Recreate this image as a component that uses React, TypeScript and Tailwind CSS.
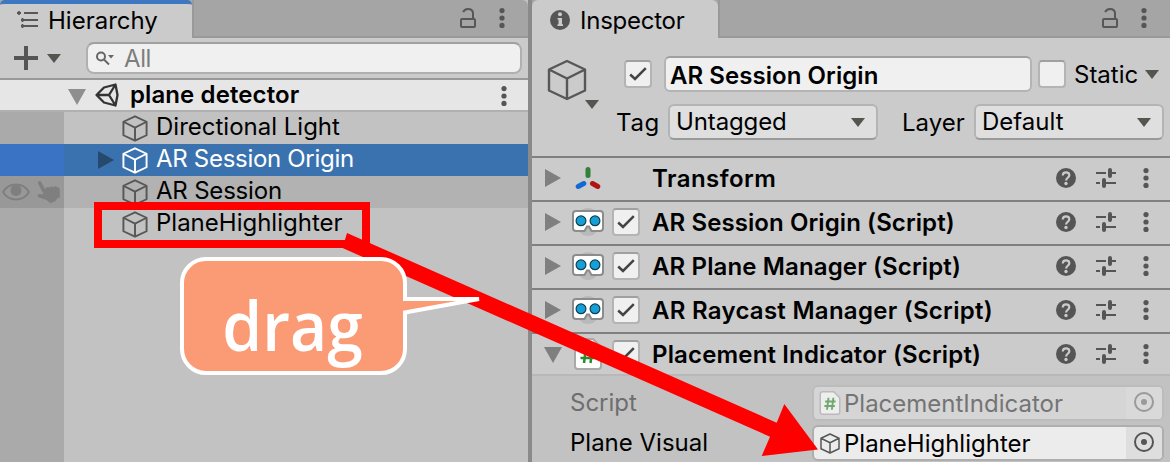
import React from "react";

const Kebab = ({ className = "" }: { className?: string }) => (
  <svg viewBox="0 0 6 20" className={`h-5 w-1.5 shrink-0 fill-[#555] ${className}`}>
    <circle cx="3" cy="2.6" r="2.6" />
    <circle cx="3" cy="10" r="2.6" />
    <circle cx="3" cy="17.4" r="2.6" />
  </svg>
);

const Lock = () => (
  <svg viewBox="0 0 16 20" className="h-5 w-4 shrink-0" fill="none" stroke="#575757" strokeWidth="2">
    <rect x="1" y="11" width="14" height="8" rx="1" />
    <path d="M3.2 4.2C4 2 5.800 1 8 1c3 0 5 1.800 5 4.500V11" />
  </svg>
);

const Caret = ({ className = "" }: { className?: string }) => (
  <svg viewBox="0 0 14 9" className={`h-[9px] w-[14px] shrink-0 fill-[#555550] ${className}`}>
    <path d="M0 0h14L7 9z" />
  </svg>
);

const Foldout = ({ open = false, className = "" }: { open?: boolean; className?: string }) =>
  open ? (
    <svg viewBox="0 0 18 16" className={`h-4 w-[18px] shrink-0 ${className}`} fill="currentColor">
      <path d="M0 0h18L9 16z" />
    </svg>
  ) : (
    <svg viewBox="0 0 16 18" className={`h-[18px] w-4 shrink-0 ${className}`} fill="currentColor">
      <path d="M0 0v18l16-9z" />
    </svg>
  );

const Cube = ({ className = "", width = 2 }: { className?: string; width?: number }) => (
  <svg viewBox="0 0 40 42" className={`shrink-0 ${className}`} fill="none" stroke="currentColor" strokeWidth={width} strokeLinejoin="round">
    <path d="M20 2 38 10.500V31.500L20 40 2 31.500V10.500zM2 10.500 20 19.500 38 10.500M20 19.500V40" />
  </svg>
);

const Checkbox = ({ checked = true, className = "" }: { checked?: boolean; className?: string }) => (
  <div className={`flex h-7 w-7 shrink-0 items-center justify-center rounded-[4px] border-2 border-[#b4b4b4] border-t-[#a0a0a0] bg-[#f0f0f0] ${className}`}>
    {checked && (
      <svg viewBox="0 0 18 14" className="h-3.5 w-[18px]" fill="none" stroke="#444" strokeWidth="2.5">
        <path d="M1.200 7.500 6 12 16.800 1.200" />
      </svg>
    )}
  </div>
);

const ArIcon = () => (
  <svg viewBox="0 0 32 28" className="-mt-0.5 h-7 w-8">
    <ellipse cx="16" cy="14" rx="12" ry="14" fill="#b9b9b9" />
    <path d="M4 3h24a3 3 0 0 1 3 3v14a3 3 0 0 1-3 3h-8.500l-2.500-4.500h-2L12.500 23H4a3 3 0 0 1-3-3V6a3 3 0 0 1 3-3z" fill="#fff" stroke="#8c8c8c" strokeWidth="2" />
    <circle cx="9" cy="12.800" r="4.900" fill="#16a0d8" stroke="#123f4d" strokeWidth="1.200" />
    <circle cx="23" cy="12.800" r="4.900" fill="#16a0d8" stroke="#123f4d" strokeWidth="1.200" />
  </svg>
);

const TransformIcon = () => (
  <svg viewBox="0 0 26 24" className="-mt-0.5 h-6 w-[26px]" strokeWidth="5" strokeLinecap="round">
    <path d="M13 3.500v6" stroke="#33803a" />
    <path d="M8.800 17.500 3.200 20.500" stroke="#1369d3" />
    <path d="M17.500 17.500l5.300 3" stroke="#b01313" />
  </svg>
);

const ScriptIcon = ({ className = "" }: { className?: string }) => (
  <svg viewBox="0 0 28 32" className={`shrink-0 ${className}`}>
    <path d="M4 1h15l8 8v19a3 3 0 0 1-3 3H4a3 3 0 0 1-3-3V4a3 3 0 0 1 3-3z" fill="#fff" stroke="#a9a9a9" strokeWidth="2" />
    <path d="M12 9 10 25M18.500 9l-2 16M7.500 14h14M6.500 20h14" stroke="#2f8a2f" strokeWidth="2.500" />
  </svg>
);

const HeaderTools = ({ className = "" }: { className?: string }) => (
  <div className={`ml-auto flex items-center pr-[21px] ${className}`}>
    <svg viewBox="0 0 20 20" className="h-5 w-5">
      <circle cx="10" cy="10" r="10" fill="#555" />
      <path d="M6.800 7.500c0-2 1.300-3.200 3.200-3.200s3.300 1.100 3.300 2.900c0 2.500-3.200 2.600-3.200 5.300" fill="none" stroke="#cbcbcb" strokeWidth="2.200" />
      <circle cx="10" cy="15.500" r="1.700" fill="#cbcbcb" />
    </svg>
    <svg viewBox="0 0 20 20" className="ml-5 h-5 w-5" fill="none" stroke="#555" strokeWidth="2">
      <path d="M0 5h10M14 5h6M0 15h4M8 15h12" />
      <path d="M14 2v6M8 12v6" strokeWidth="4" strokeLinecap="round" />
    </svg>
    <Kebab className="ml-[27px]" />
  </div>
);

const HierarchyRow = ({ label, state = "normal", tracking = "" }: { label: string; state?: "normal" | "selected" | "hover"; tracking?: string }) => {
  const gutter = { normal: "bg-[#aaaaaa]", selected: "bg-[#3b73c4]", hover: "bg-[#989898]" }[state];
  const body = { normal: "text-black", selected: "bg-[#3a72b0] text-white", hover: "bg-[#b2b2b2] text-black" }[state];
  return (
    <div className="flex h-8">
      <div className={`flex w-16 shrink-0 items-center gap-[7px] pl-0.5 ${gutter}`}>
        {state === "hover" && (
          <>
            <svg viewBox="0 0 28 18" className="h-[18px] w-7" fill="none" stroke="#7f7f7f" strokeWidth="2">
              <path d="M1 9C7-1 21-1 27 9 21 19 7 19 1 9z" />
              <circle cx="14" cy="7.500" r="5.500" fill="#7f7f7f" stroke="none" />
            </svg>
            <svg viewBox="0 0 24 24" className="h-6 w-6 fill-[#7f7f7f]">
              <path d="M1 3.200C.5 1.200 3.300.2 4.300 2L8.200 9.300C9.300 7 11.500 6.500 12.500 7.800 13.500 6.300 15.500 6.200 16.500 7.300 17.600 5.900 19.300 6 20.200 7.400 21.500 7 22.500 8 22.700 9.500L23 17 19.500 19V20.500L13.500 23.300 9.500 20 2 17.600C-.2 16.700.5 14 2.500 14L6.500 14.300z" />
            </svg>
          </>
        )}
      </div>
      <div className={`flex flex-1 items-center pl-[34px] ${body}`}>
        <div className="w-6 shrink-0 text-[#27496d]">{state === "selected" && <Foldout />}</div>
        <Cube width={3} className={`h-[27px] w-[26px] ${state === "selected" ? "text-white" : "text-[#575757]"}`} />
        <span className={`-mt-0.5 ml-2 ${tracking}`}>{label}</span>
      </div>
    </div>
  );
};

const ComponentHeader = ({ label, icon, check = true, open = false, tracking }: { label: string; icon: React.ReactNode; check?: boolean; open?: boolean; tracking: string }) => (
  <div className={`flex items-center border-t-2 border-[#808080] ${open ? "h-[42px]" : "h-11"}`}>
    <div className={`flex w-[38px] shrink-0 justify-center pl-1 text-[#7f7f7f] ${open ? "mt-px" : "-mt-0.5"}`}>
      <Foldout open={open} />
    </div>
    <div className="flex w-9 shrink-0 items-center justify-center">{icon}</div>
    <div className="-mt-0.5 flex w-[46px] shrink-0 pl-1.5">{check && <Checkbox className={open ? "mt-0.5" : ""} />}</div>
    <span className={`whitespace-nowrap font-semibold ${open ? "mt-px" : "-mt-px"} ${tracking}`}>{label}</span>
    <HeaderTools className={open ? "" : "-mt-0.5"} />
  </div>
);

const ObjectField = ({ icon, label, disabled = false }: { icon: React.ReactNode; label: string; disabled?: boolean }) => (
  <div className={`flex h-9 w-[352px] items-center overflow-hidden rounded-[6px] border-2 ${disabled ? "border-[#bcbcbc] bg-[#d5d5d5] text-[#747474]" : "border-[#aeaeae] bg-[#ececec]"}`}>
    <div className="flex w-[31px] items-center justify-center">{icon}</div>
    <span className="-ml-px mt-0.5">{label}</span>
    <div className={`ml-auto flex h-full w-9 items-center justify-center ${disabled ? "bg-[#d9d9d9] text-[#999]" : "bg-[#dedede] text-[#555]"}`}>
      <svg viewBox="0 0 20 20" className="-mt-0.5 h-5 w-5">
        <circle cx="10" cy="10" r="9" fill="none" stroke="currentColor" strokeWidth="2" />
        <circle cx="10" cy="10" r="3" fill="currentColor" />
      </svg>
    </div>
  </div>
);

const Hierarchy = () => (
  <section className="flex w-[528px] shrink-0 flex-col bg-[#c2c2c2]">
    <div className="flex h-[38px] rounded-tr-[6px] bg-[#a5a5a5]">
      <div className="flex w-48 items-center overflow-hidden rounded-t-[5px] border-t-4 border-[#3d76c1] bg-[#cbcbcb] pl-[17px]">
        <svg viewBox="0 0 22 18" className="-mt-1 h-[18px] w-[22px]" stroke="#575757" strokeWidth="1.800" fill="none">
          <path d="M0 3h4M2 1v4M7 3h14M7 10h14M7 16h14M4 10h3M5.500 8v4M4 16h3M5.500 14v4" />
        </svg>
        <span className="ml-[9px]">Hierarchy</span>
      </div>
      <div className="flex flex-1 items-center justify-end border-b-2 border-l-2 border-[#999] pr-[23px]">
        <Lock />
        <Kebab className="ml-[23px]" />
      </div>
    </div>
    <div className="flex h-[42px] items-center border-b-2 border-[#999] bg-[#cbcbcb] pl-3.5 pr-1.5">
      <svg viewBox="0 0 24 24" className="h-6 w-6" stroke="#555" strokeWidth="4">
        <path d="M12 0v24M0 12h24" />
      </svg>
      <Caret className="ml-[9px]" />
      <div className="ml-[25px] flex h-8 flex-1 items-center rounded-[8px] border-2 border-[#b0b0b0] border-t-[#a0a0a0] bg-[#f0f0f0] pl-2 text-[#7d7d7d]">
        <svg viewBox="0 0 18 14" className="h-3.5 w-[18px]" fill="none" stroke="#666" strokeWidth="2">
          <circle cx="5" cy="5.500" r="4" />
          <path d="M8 8.500l5 5" />
          <path d="M12 4h6l-3 3.500z" fill="#666" stroke="none" />
        </svg>
        <span className="ml-2.5 mt-0.5 tracking-[-0.4px]">All</span>
      </div>
    </div>
    <div className="flex h-8 items-center border-b-2 border-[#b0b0b0] bg-[#e6e6e6] pl-[68px] pr-[21px]">
      <Foldout open className="mt-1 text-[#8f8f8f]" />
      <svg viewBox="0 0 24 24" className="ml-[9px] h-6 w-6" fill="none" stroke="#333" strokeWidth="2.300" strokeLinejoin="round">
        <path d="M14 12H1.500L9 4.500 20.500 1.500 22.500 12 20.500 22.500 9 19.500 1.500 12M14 12l6.500-10.500M14 12l6.500 10.500" />
      </svg>
      <span className="ml-[11px] font-semibold tracking-[0.1px]">plane detector</span>
      <Kebab className="ml-auto mt-0.5" />
    </div>
    <HierarchyRow label="Directional Light" />
    <HierarchyRow label="AR Session Origin" state="selected" tracking="tracking-[-0.3px]" />
    <HierarchyRow label="AR Session" state="hover" tracking="tracking-[-0.2px]" />
    <HierarchyRow label="PlaneHighlighter" />
    <div className="w-16 flex-1 bg-[#aaaaaa]" />
  </section>
);

const Inspector = () => (
  <section className="flex w-[638px] shrink-0 flex-col overflow-hidden bg-[#cbcbcb]">
    <div className="flex h-[38px] shrink-0 bg-[#a5a5a5]">
      <div className="flex w-[186px] items-center rounded-t-[6px] bg-[#cbcbcb] pl-[18px] pt-1">
        <svg viewBox="0 0 20 20" className="-mt-0.5 h-5 w-5">
          <circle cx="10" cy="10" r="10" fill="#555" />
          <circle cx="10" cy="4.200" r="2" fill="#cbcbcb" />
          <path d="M7.500 8H12v6.200h1V16H7.500v-1.800h1V9.500h-1z" fill="#cbcbcb" />
        </svg>
        <span className="ml-2.5 tracking-[-0.25px]">Inspector</span>
      </div>
      <div className="flex flex-1 items-center justify-end border-b-2 border-l-2 border-[#999] pr-[23px]">
        <Lock />
        <Kebab className="ml-[23px]" />
      </div>
    </div>
    <div className="flex h-[118px] shrink-0 pt-[18px]">
      <div className="flex w-[85px] pl-[15px] pt-[3px]">
        <Cube width={2.4} className="h-[42px] w-10 text-[#575757]" />
        <Caret className="-ml-0.5 mt-[41px]" />
      </div>
      <div className="flex flex-1 flex-col">
        <div className="flex h-9 items-center pl-[7px]">
          <Checkbox />
          <div className="ml-3 flex h-9 w-[368px] items-center rounded-[6px] border-2 border-[#b4b4b4] border-t-[#a0a0a0] bg-[#f0f0f0] pl-1 pt-[3px] font-semibold tracking-[0.06px]">
            AR Session Origin
          </div>
          <Checkbox checked={false} className="ml-[6px]" />
          <span className="ml-2 mt-0.5 w-[66px]">Static</span>
          <Caret className="ml-[5px]" />
        </div>
        <div className="mt-3 flex h-9 items-center">
          <span className="-ml-px mt-0.5 w-[52px] tracking-[0.7px]">Tag</span>
          <div className="flex h-9 w-[210px] items-center justify-between rounded-[6px] border-2 border-[#b4b4b4] border-b-[#9a9a9a] bg-[#dfdfdf] pl-1.5 pr-[11px]">
            <span className="tracking-[-0.12px]">Untagged</span>
            <Caret />
          </div>
          <span className="ml-6 mt-0.5 w-[72px]">Layer</span>
          <div className="flex h-9 w-[190px] items-center justify-between rounded-[6px] border-2 border-[#b4b4b4] border-b-[#9a9a9a] bg-[#dfdfdf] pl-1.5 pr-[11px]">
            <span>Default</span>
            <Caret />
          </div>
        </div>
      </div>
    </div>
    <ComponentHeader label="Transform" icon={<TransformIcon />} check={false} tracking="tracking-[0.45px]" />
    <ComponentHeader label="AR Session Origin (Script)" icon={<ArIcon />} tracking="tracking-[0.09px]" />
    <ComponentHeader label="AR Plane Manager (Script)" icon={<ArIcon />} tracking="tracking-[0.13px]" />
    <ComponentHeader label="AR Raycast Manager (Script)" icon={<ArIcon />} tracking="tracking-[0.27px]" />
    <ComponentHeader label="Placement Indicator (Script)" icon={<ScriptIcon className="h-8 w-7" />} open tracking="tracking-[0.16px]" />
    <div className="flex flex-1 flex-col gap-1 border-t-2 border-[#b8b8b8] bg-[#c2c2c2] pl-[38px] pt-[9px]">
      <div className="flex items-center">
        <span className="w-[242px] text-[#6e6e6e]">Script</span>
        <ObjectField disabled label="PlacementIndicator" icon={<ScriptIcon className="h-6 w-[22px] opacity-60" />} />
      </div>
      <div className="flex items-center">
        <span className="w-[242px]">Plane Visual</span>
        <ObjectField label="PlaneHighlighter" icon={<Cube width={3} className="h-[21px] w-5 text-[#575757]" />} />
      </div>
    </div>
  </section>
);

export default function App() {
  return (
    <div className="relative flex h-[462px] w-[1170px] overflow-hidden bg-[#8a8a8a] font-['Inter',sans-serif] text-[24px] leading-8 text-black">
      <Hierarchy />
      <div className="w-1 shrink-0" />
      <Inspector />
      <svg viewBox="0 0 1170 462" className="absolute inset-0 h-[462px] w-[1170px]">
        <rect x="98" y="206" width="268" height="38" fill="none" stroke="#f00" strokeWidth="8" />
        <path d="M347 233 776.700 422.700 784.300 404 818 449.500 761.700 456 770 436.700 342.500 248z" fill="#f00" />
        <path
          d="M206 259h175a24 24 0 0 1 24 24v16h74L405 312.500V349a24 24 0 0 1-24 24H206a24 24 0 0 1-24-24V283a24 24 0 0 1 24-24z"
          fill="#fa9b75"
          stroke="#fff"
          strokeWidth="4"
        />
      </svg>
      <div className="absolute left-[181px] top-[278px] flex h-[92px] w-[223px] scale-x-[0.93] items-center justify-center font-['Open_Sans',sans-serif] text-[69px] font-semibold leading-none text-white">
        drag
      </div>
    </div>
  );
}
